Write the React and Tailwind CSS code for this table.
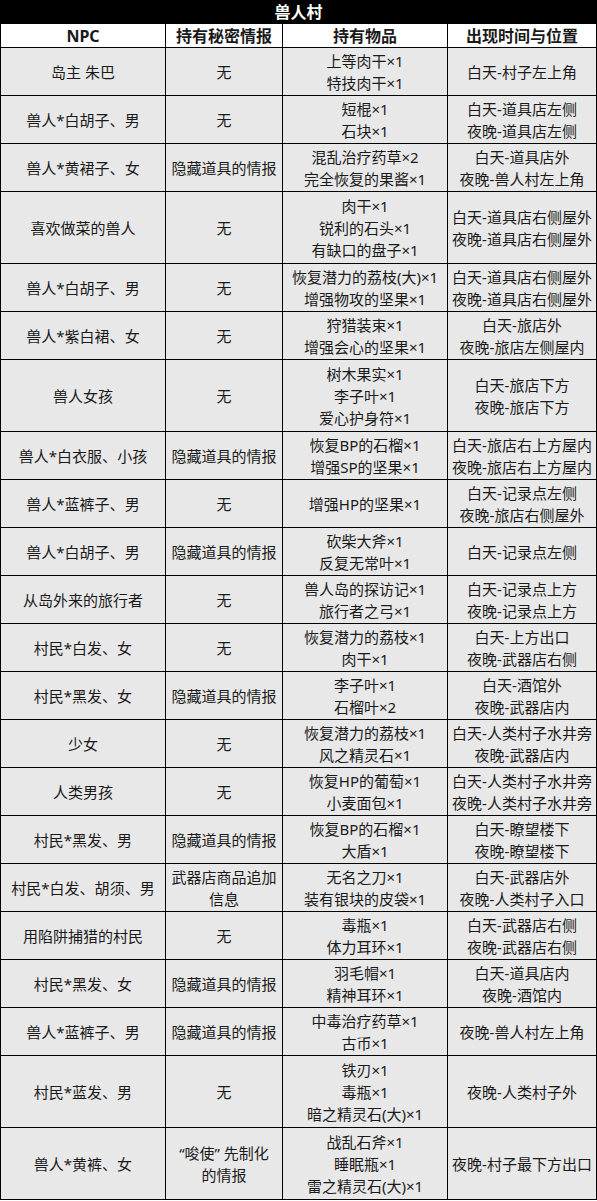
import React from 'react';

const rows = [
  ['岛主 朱巴', ['无'], ['上等肉干×1', '特技肉干×1'], ['白天-村子左上角']],
  ['兽人*白胡子、男', ['无'], ['短棍×1', '石块×1'], ['白天-道具店左侧', '夜晚-道具店左侧']],
  ['兽人*黄裙子、女', ['隐藏道具的情报'], ['混乱治疗药草×2', '完全恢复的果酱×1'], ['白天-道具店外', '夜晚-兽人村左上角']],
  ['喜欢做菜的兽人', ['无'], ['肉干×1', '锐利的石头×1', '有缺口的盘子×1'], ['白天-道具店右侧屋外', '夜晚-道具店右侧屋外']],
  ['兽人*白胡子、男', ['无'], ['恢复潜力的荔枝(大)×1', '增强物攻的坚果×1'], ['白天-道具店右侧屋外', '夜晚-道具店右侧屋外']],
  ['兽人*紫白裙、女', ['无'], ['狩猎装束×1', '增强会心的坚果×1'], ['白天-旅店外', '夜晚-旅店左侧屋内']],
  ['兽人女孩', ['无'], ['树木果实×1', '李子叶×1', '爱心护身符×1'], ['白天-旅店下方', '夜晚-旅店下方']],
  ['兽人*白衣服、小孩', ['隐藏道具的情报'], ['恢复BP的石榴×1', '增强SP的坚果×1'], ['白天-旅店右上方屋内', '夜晚-旅店右上方屋内']],
  ['兽人*蓝裤子、男', ['无'], ['增强HP的坚果×1'], ['白天-记录点左侧', '夜晚-旅店右侧屋外']],
  ['兽人*白胡子、男', ['隐藏道具的情报'], ['砍柴大斧×1', '反复无常叶×1'], ['白天-记录点左侧']],
  ['从岛外来的旅行者', ['无'], ['兽人岛的探访记×1', '旅行者之弓×1'], ['白天-记录点上方', '夜晚-记录点上方']],
  ['村民*白发、女', ['无'], ['恢复潜力的荔枝×1', '肉干×1'], ['白天-上方出口', '夜晚-武器店右侧']],
  ['村民*黑发、女', ['隐藏道具的情报'], ['李子叶×1', '石榴叶×2'], ['白天-酒馆外', '夜晚-武器店内']],
  ['少女', ['无'], ['恢复潜力的荔枝×1', '风之精灵石×1'], ['白天-人类村子水井旁', '夜晚-武器店内']],
  ['人类男孩', ['无'], ['恢复HP的葡萄×1', '小麦面包×1'], ['白天-人类村子水井旁', '夜晚-人类村子水井旁']],
  ['村民*黑发、男', ['隐藏道具的情报'], ['恢复BP的石榴×1', '大盾×1'], ['白天-瞭望楼下', '夜晚-瞭望楼下']],
  ['村民*白发、胡须、男', ['武器店商品追加', '信息'], ['无名之刀×1', '装有银块的皮袋×1'], ['白天-武器店外', '夜晚-人类村子入口']],
  ['用陷阱捕猎的村民', ['无'], ['毒瓶×1', '体力耳环×1'], ['白天-武器店右侧', '夜晚-武器店右侧']],
  ['村民*黑发、女', ['隐藏道具的情报'], ['羽毛帽×1', '精神耳环×1'], ['白天-道具店内', '夜晚-酒馆内']],
  ['兽人*蓝裤子、男', ['隐藏道具的情报'], ['中毒治疗药草×1', '古币×1'], ['夜晚-兽人村左上角']],
  ['村民*蓝发、男', ['无'], ['铁刃×1', '毒瓶×1', '暗之精灵石(大)×1'], ['夜晚-人类村子外']],
  ['兽人*黄裤、女', ['“唆使” 先制化', '的情报'], ['战乱石斧×1', '睡眠瓶×1', '雷之精灵石(大)×1'], ['夜晚-村子最下方出口']],
];

// one table cell, rows are 24px per line (min 2 lines)
const Cell = ({ lines, first, tall }) => (
  <div
    className={`flex flex-col items-center justify-center text-center border-r border-b border-black bg-[#e8e8e8] ${first ? 'border-l' : ''} ${tall ? 'h-[72px]' : 'h-[48px]'}`}
  >
    {lines.map((t, i) => (
      <div key={i} className="leading-[22px] whitespace-pre">{t}</div>
    ))}
  </div>
);

const App = () => {
  return (
    <div
      lang="zh-CN"
      className="w-[597px] bg-white text-[15px] text-[#1a1a1a]"
      style={{ fontFamily: '"Noto Sans", "Noto Sans CJK SC", "Noto Sans CJK JP", sans-serif' }}
    >
      <div className="h-[24px] bg-black text-white font-bold text-[16px] leading-[24px] text-center">兽人村</div>
      <div className="grid grid-cols-[166px_117px_165px_149px]">
        {['NPC', '持有秘密情报', '持有物品', '出现时间与位置'].map((h, i) => (
          <div
            key={h}
            className={`h-[24px] flex items-center justify-center border-r border-b border-black bg-white font-bold text-[16px] ${i === 0 ? 'border-l' : ''}`}
          >
            {h}
          </div>
        ))}
        {rows.map((r, idx) => {
          const tall = r[2].length > 2;
          return (
            <React.Fragment key={idx}>
              <Cell lines={[r[0]]} first tall={tall} />
              <Cell lines={r[1]} tall={tall} />
              <Cell lines={r[2]} tall={tall} />
              <Cell lines={r[3]} tall={tall} />
            </React.Fragment>
          );
        })}
      </div>
    </div>
  );
};

export default App;
